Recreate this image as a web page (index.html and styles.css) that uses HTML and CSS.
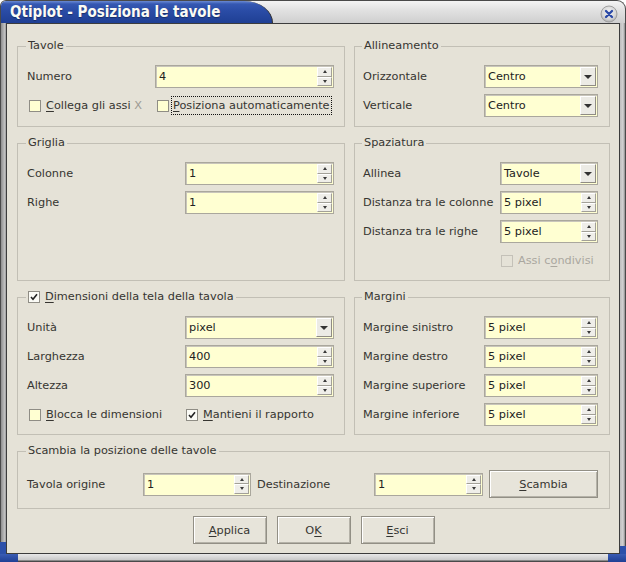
FILE: index.html
```html
<!DOCTYPE html>
<html>
<head>
<meta charset="utf-8">
<title>Qtiplot - Posiziona le tavole</title>
<link rel="stylesheet" href="styles.css">
</head>
<body>
<div class="window">
  <div class="titlebar">
    <div class="tab"><span class="title">Qtiplot - Posiziona le tavole</span></div>
    <div class="tabrest">
      <svg class="close" width="18" height="18" viewBox="0 0 18 18">
        <defs>
          <radialGradient id="cg" cx="50%" cy="40%" r="60%">
            <stop offset="0" stop-color="#f6f6f6"/>
            <stop offset="0.7" stop-color="#d6d6d6"/>
            <stop offset="1" stop-color="#a8a8a8"/>
          </radialGradient>
        </defs>
        <circle cx="9" cy="9" r="8" fill="url(#cg)" stroke="#a0a0a0" stroke-width="1"/>
        <path d="M6 6 L12 12 M12 6 L6 12" stroke="#2b49a6" stroke-width="2.3" stroke-linecap="round"/>
      </svg>
    </div>
  </div>
  <div class="mid">
    <div class="edge-l"></div>
    <div class="content">

      <fieldset class="group top">
        <legend>Tavole</legend>
        <div class="form c-tavole">
          <span class="lbl">Numero</span>
          <div class="spin"><span class="val">4</span><span class="arrows"><i class="up"></i><i class="dn"></i></span></div>
          <div class="check"><span class="cb"></span><span><u>C</u>ollega gli assi <span class="dimx">X</span></span></div>
          <div class="check"><span class="cb"></span><span class="focus"><u>P</u>osiziona automaticamente</span></div>
        </div>
      </fieldset>

      <fieldset class="group gr top">
        <legend>Allineamento</legend>
        <div class="form c-right">
          <span class="lbl">Orizzontale</span>
          <div class="combo"><span class="val">Centro</span><span class="drop"></span></div>
          <span class="lbl">Verticale</span>
          <div class="combo"><span class="val">Centro</span><span class="drop"></span></div>
        </div>
      </fieldset>

      <fieldset class="group">
        <legend>Griglia</legend>
        <div class="form c-wide">
          <span class="lbl">Colonne</span>
          <div class="spin"><span class="val">1</span><span class="arrows"><i class="up"></i><i class="dn"></i></span></div>
          <span class="lbl">Righe</span>
          <div class="spin"><span class="val">1</span><span class="arrows"><i class="up"></i><i class="dn"></i></span></div>
        </div>
      </fieldset>

      <fieldset class="group gr">
        <legend>Spaziatura</legend>
        <div class="form c-spaz">
          <span class="lbl">Allinea</span>
          <div class="combo"><span class="val">Tavole</span><span class="drop"></span></div>
          <span class="lbl">Distanza tra le colonne</span>
          <div class="spin"><span class="val">5 pixel</span><span class="arrows"><i class="up"></i><i class="dn"></i></span></div>
          <span class="lbl">Distanza tra le righe</span>
          <div class="spin"><span class="val">5 pixel</span><span class="arrows"><i class="up"></i><i class="dn"></i></span></div>
          <span></span>
          <div class="check disabled"><span class="cb"></span><span>Assi c<u>o</u>ndivisi</span></div>
        </div>
      </fieldset>

      <fieldset class="group">
        <legend><span class="cb checked"><svg width="8" height="8" viewBox="0 0 8 8"><path d="M1 4 L3 6.2 L7 1.2" fill="none" stroke="#222" stroke-width="1.6"/></svg></span><span><u>D</u>imensioni della tela della tavola</span></legend>
        <div class="form c-wide">
          <span class="lbl">Unità</span>
          <div class="combo"><span class="val">pixel</span><span class="drop"></span></div>
          <span class="lbl">Larghezza</span>
          <div class="spin"><span class="val">400</span><span class="arrows"><i class="up"></i><i class="dn"></i></span></div>
          <span class="lbl">Altezza</span>
          <div class="spin"><span class="val">300</span><span class="arrows"><i class="up"></i><i class="dn"></i></span></div>
          <div class="check"><span class="cb"></span><span><u>B</u>locca le dimensioni</span></div>
          <div class="check c2"><span class="cb checked"><svg width="8" height="8" viewBox="0 0 8 8"><path d="M1 4 L3 6.2 L7 1.2" fill="none" stroke="#222" stroke-width="1.6"/></svg></span><span><u>M</u>antieni il rapporto</span></div>
        </div>
      </fieldset>

      <fieldset class="group gr">
        <legend>Margini</legend>
        <div class="form c-right">
          <span class="lbl">Margine sinistro</span>
          <div class="spin"><span class="val">5 pixel</span><span class="arrows"><i class="up"></i><i class="dn"></i></span></div>
          <span class="lbl">Margine destro</span>
          <div class="spin"><span class="val">5 pixel</span><span class="arrows"><i class="up"></i><i class="dn"></i></span></div>
          <span class="lbl">Margine superiore</span>
          <div class="spin"><span class="val">5 pixel</span><span class="arrows"><i class="up"></i><i class="dn"></i></span></div>
          <span class="lbl">Margine inferiore</span>
          <div class="spin"><span class="val">5 pixel</span><span class="arrows"><i class="up"></i><i class="dn"></i></span></div>
        </div>
      </fieldset>

      <fieldset class="group full swapgroup">
        <legend>Scambia la posizione delle tavole</legend>
        <div class="swap">
          <span class="lbl w-src">Tavola origine</span>
          <div class="spin w-s1"><span class="val">1</span><span class="arrows"><i class="up"></i><i class="dn"></i></span></div>
          <span class="lbl w-dst">Destinazione</span>
          <div class="spin w-s2"><span class="val">1</span><span class="arrows"><i class="up"></i><i class="dn"></i></span></div>
          <button class="btn btn-swap"><u>S</u>cambia</button>
        </div>
      </fieldset>

      <div class="buttons">
        <button class="btn"><u>A</u>pplica</button>
        <button class="btn">O<u>K</u></button>
        <button class="btn"><u>E</u>sci</button>
      </div>

    </div>
    <div class="edge-r"></div>
  </div>
  <div class="edge-b"></div>
</div>
</body>
</html>
```

FILE: styles.css
```css
* { box-sizing: border-box; }

body {
  margin: 0;
  background: #ffffff;
  font-family: "DejaVu Sans", "Noto Sans", sans-serif;
  font-size: 11.3px;
  color: #363531;
}

.window {
  width: 626px;
  height: 562px;
  display: flex;
  flex-direction: column;
}

/* ---------- title bar ---------- */
.titlebar {
  height: 23px;
  flex: none;
  display: flex;
  border: 1px solid #4a4a4a;
  border-bottom: 0;
  border-radius: 6px 9px 0 0;
  overflow: hidden;
  background: linear-gradient(#f4f4f4, #e2e2e2 40%, #cfcfcf);
}

.tab {
  width: 272px;
  flex: none;
  height: 100%;
  background: linear-gradient(#6a8ad4 0, #3558b2 3px, #2a4ca6 45%, #1f3f94 100%);
  border-right: 1px solid #2c2c2c;
  border-top-right-radius: 30px 23px;
  display: flex;
  align-items: center;
}

.title {
  padding-left: 9px;
  font-family: "DejaVu Sans Condensed", "DejaVu Sans", sans-serif;
  font-weight: bold;
  font-size: 15px;
  line-height: 22px;
  color: #fbfbf4;
  text-shadow: 0 1px 1px rgba(0, 0, 0, 0.35);
  white-space: nowrap;
}

.tabrest {
  flex: 1;
  display: flex;
  justify-content: flex-end;
  align-items: center;
  padding: 3px 7px 0 0;
}

/* ---------- frame ---------- */
.mid {
  flex: 1;
  display: flex;
  min-height: 0;
}

.edge-l {
  width: 6px;
  flex: none;
  background:
    linear-gradient(to bottom, transparent 0, transparent calc(100% - 12px), #2c50aa calc(100% - 12px)),
    linear-gradient(to right, #4a4a4a 0, #4a4a4a 1px, #8e8e8e 1px, #c6c6c6 5px, #8a8a8a 6px);
}

.edge-r {
  width: 6px;
  flex: none;
  background:
    linear-gradient(to bottom, transparent 0, transparent calc(100% - 8px), #2c50aa calc(100% - 8px)),
    linear-gradient(to right, #bdbdbd 0, #d2d2d2 3px, #8a8a8a 5px, #4a4a4a 5px);
}

.edge-b {
  height: 8px;
  flex: none;
  display: flex;
  justify-content: space-between;
  background: linear-gradient(to bottom, #e8e8e8 0, #c9c9c9 6px, #4a4a4a 7px);
}

.edge-b::before,
.edge-b::after {
  content: "";
  width: 18px;
  height: 8px;
  background: linear-gradient(#3a5cb4, #1f3f94);
}

.content {
  flex: 1;
  border: 1px solid #3c3c3c;
  background: #e5e2d7;
  padding: 15px 9px 0 10px;
  display: grid;
  grid-template-columns: 328px 256px;
  column-gap: 9px;
  row-gap: 9px;
  align-content: start;
}

/* ---------- group boxes ---------- */
.group {
  margin: 0;
  padding: 12px 10px 8px 9px;
  border: 1px solid #c2bfb5;
  min-width: 0;
}

.group.top {
  padding-bottom: 9px;
}

.group.gr {
  padding-left: 8px;
  padding-right: 11px;
}

.group.full {
  grid-column: 1 / -1;
}

.swapgroup {
  padding-bottom: 10px;
}

.group legend {
  padding: 0 2px;
  margin-left: -1px;
  line-height: 14px;
  display: flex;
  align-items: center;
  gap: 5px;
}

.form {
  display: grid;
  grid-auto-rows: 23px;
  row-gap: 6px;
  align-items: center;
}

.c-tavole { grid-template-columns: 128px 179px; }
.c-right  { grid-template-columns: 121px 114px; }
.c-wide   { grid-template-columns: 158px 149px; }
.c-spaz   { grid-template-columns: 137px 98px; }

.lbl {
  white-space: nowrap;
}

/* ---------- spin box / combo ---------- */
.spin,
.combo {
  height: 23px;
  display: flex;
  border: 1px solid #aaa79d;
  box-shadow: inset 1px 1px 0 #c8c5bb;
  background: #ffffd2;
  padding: 1px;
}

.val {
  flex: 1;
  padding-left: 2px;
  line-height: 19px;
  color: #222;
  white-space: nowrap;
}

.arrows {
  width: 15px;
  flex: none;
  display: flex;
  flex-direction: column;
}

.arrows i {
  flex: 1;
  display: flex;
  align-items: center;
  justify-content: center;
  background: #efeee9;
  border: 1px solid;
  border-color: #ffffff #a2a097 #a2a097 #ffffff;
}

.arrows i::after {
  content: "";
  width: 0;
  height: 0;
  border-left: 2.5px solid transparent;
  border-right: 2.5px solid transparent;
}

.arrows .up::after {
  border-bottom: 3px solid #3a3a3a;
}

.arrows .dn::after {
  border-top: 3px solid #3a3a3a;
}

.drop {
  width: 16px;
  flex: none;
  display: flex;
  align-items: center;
  justify-content: center;
  background: #ecebe5;
  border: 1px solid;
  border-color: #ffffff #8f8c83 #8f8c83 #ffffff;
}

.drop::after {
  content: "";
  width: 0;
  height: 0;
  border-left: 4px solid transparent;
  border-right: 4px solid transparent;
  border-top: 4px solid #333;
}

/* ---------- checkboxes ---------- */
.check {
  display: flex;
  align-items: center;
  gap: 5px;
  margin-left: 2px;
  white-space: nowrap;
}

.check.c2 {
  margin-left: 1px;
}

.cb {
  width: 12px;
  height: 12px;
  flex: none;
  border: 1px solid #8f8d85;
  background: #ffffd2;
  display: flex;
  align-items: center;
  justify-content: center;
}

.cb.checked {
  background: #fbfbf6;
}

.focus {
  border: 1px dotted #111;
  padding: 2px 1px;
  margin-left: -3px;
}

.dimx {
  color: #9c9a93;
}

.disabled {
  color: #aaa79f;
  margin-left: 1px;
}

.disabled .cb {
  border-color: #c4c1b8;
  background: transparent;
}

u {
  text-decoration: underline;
  text-underline-offset: 2px;
}

/* ---------- buttons ---------- */
.btn {
  height: 28px;
  width: 74px;
  font-family: "DejaVu Sans", sans-serif;
  font-size: 11.3px;
  color: #363531;
  background: #e7e4da;
  border: 1px solid #928f85;
  box-shadow: inset 1px 1px 0 #ffffff, inset -1px -1px 0 #b5b2a8;
  padding: 0;
  flex: none;
}

.buttons {
  grid-column: 1 / -1;
  display: flex;
  justify-content: center;
  gap: 10px;
  margin-top: -2px;
}

/* ---------- swap row ---------- */
.swap {
  display: flex;
  align-items: center;
  height: 28px;
}

.w-src { width: 116px; flex: none; }
.w-s1  { width: 108px; flex: none; }
.w-dst { width: 117px; flex: none; margin-left: 6px; }
.w-s2  { width: 109px; flex: none; }
.swap .btn-swap { width: 109px; margin-left: 6px; }
```
